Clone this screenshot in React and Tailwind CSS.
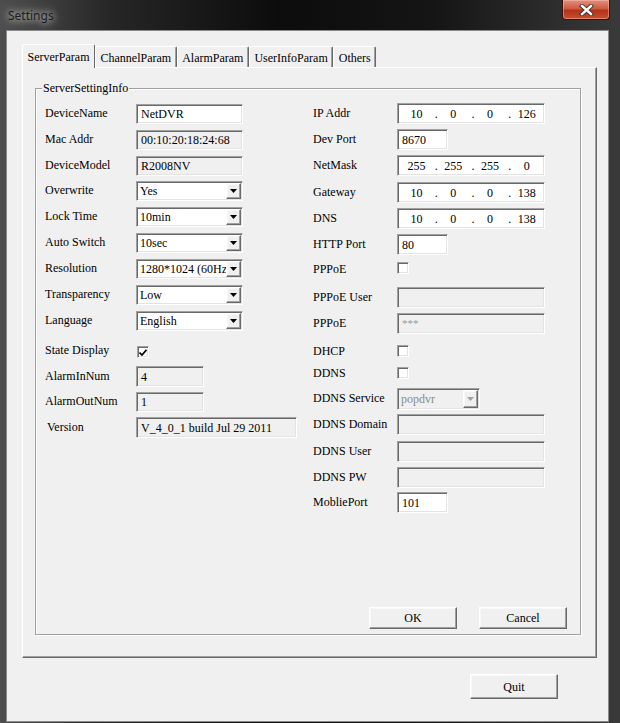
import React from 'react';

const serif = { fontFamily: '"Liberation Serif", "Times New Roman", serif' };

const sunken =
  'border border-[#a0a0a0] border-b-white border-r-white shadow-[inset_1px_1px_0_#696969,inset_-1px_-1px_0_#e3e3e3]';
const raised =
  'border border-white border-b-[#696969] border-r-[#696969] shadow-[inset_-1px_-1px_0_#a0a0a0,inset_1px_1px_0_#f8f8f8]';

const Field = ({ w, h = 'h-[20px]', value, ro, muted }) => (
  <div
    className={`${w} ${h} ${sunken} ${ro ? 'bg-[#f0f0f0]' : 'bg-white'} flex items-center pl-[4px] overflow-hidden whitespace-nowrap ${
      muted ? 'text-[#9a9a9a] text-[11px]' : 'text-black'
    }`}
  >
    {value}
  </div>
);

const Arrow = ({ disabled }) => (
  <svg width="7" height="4" viewBox="0 0 7 4">
    <path d="M0 0h7L3.5 4z" fill={disabled ? '#a0a0a0' : '#000'} />
  </svg>
);

const Select = ({ w, h = 'h-[20px]', value, disabled }) => (
  <div
    className={`${w} ${h} ${sunken} ${disabled ? 'bg-[#f0f0f0] text-[#8a8a8a]' : 'bg-white text-black'} flex items-stretch p-[1px]`}
  >
    <span className="flex-1 flex items-center pl-[2px] overflow-hidden whitespace-nowrap">{value}</span>
    <span className={`w-[15px] bg-[#f0f0f0] ${raised} flex items-center justify-center`}>
      <Arrow disabled={disabled} />
    </span>
  </div>
);

const Check = ({ checked, className = '' }) => (
  <div className={`w-[12px] h-[12px] bg-white ${sunken} flex items-center justify-center ${className}`}>
    {checked && (
      <svg width="8" height="7" viewBox="0 0 8 7">
        <path d="M0.5 3.5 L3 6 L7.5 0.8" stroke="#000" strokeWidth="1.7" fill="none" />
      </svg>
    )}
  </div>
);

const IpField = ({ parts }) => (
  <div className={`w-[148px] h-[21px] bg-white ${sunken} flex items-center pl-[2px] pr-[1px]`}>
    {parts.map((p, i) => (
      <React.Fragment key={i}>
        <span className="flex-1 text-center">{p}</span>
        {i < 3 && <span className="w-[4px] text-center translate-x-[1.5px]">.</span>}
      </React.Fragment>
    ))}
  </div>
);

const Btn = ({ label, h = 'h-[22px]' }) => (
  <button className={`w-[88px] ${h} bg-[#f0f0f0] ${raised} text-[12px] text-black flex items-center justify-center`} style={serif}>
    {label}
  </button>
);

const Row = ({ label, lw, mt = '', h = 'h-[20px]', lpad = '', children }) => (
  <div className={`flex items-center ${h} ${mt}`}>
    <span className={`${lw} ${lpad} pb-[2px] whitespace-nowrap`}>{label}</span>
    {children}
  </div>
);

const tabs = ['ServerParam', 'ChannelParam', 'AlarmParam', 'UserInfoParam', 'Others'];

export default function App() {
  const L = 'w-[91px]';
  const R = 'w-[84px]';
  return (
    <div className="w-[620px] h-[723px] flex flex-col bg-[linear-gradient(90deg,#4e4e4e_0%,#262626_18%,#0c0c0c_45%,#151515_70%,#3a3a3a_100%)] overflow-hidden">
      {/* Title bar */}
      <div className="h-[30px] flex items-start justify-between">
        <span
          className="pl-[8px] pt-[7px] text-[12px] leading-[18px] text-[#1b1b1b] [text-shadow:0_0_6px_#d8d8d8,0_0_12px_#bdbdbd]"
          style={{ fontFamily: '"Noto Sans", "Open Sans", sans-serif' }}
        >
          Settings
        </span>
        <div className="mr-[10px] w-[48px] h-[20px] rounded-b-[4px] border border-t-0 border-[#3b1208] bg-[linear-gradient(180deg,#e0917f_0%,#cf5a3f_45%,#b3321a_55%,#c8502f_100%)] shadow-[inset_0_0_0_1px_rgba(255,200,190,0.45)] flex items-center justify-center">
          <svg width="15" height="12" viewBox="0 0 15 12">
            <path d="M3 2 L12 10 M12 2 L3 10" stroke="#3a2a28" strokeWidth="4.2" strokeLinecap="square" />
            <path d="M3 2 L12 10 M12 2 L3 10" stroke="#fff" strokeWidth="2.4" strokeLinecap="square" />
          </svg>
        </div>
      </div>

      {/* Client area */}
      <div className="ml-[6px] w-[603px] h-[692px] border border-[#8a8a8a] bg-[#f0f0f0] flex flex-col text-[12px] text-black" style={serif}>
        {/* Tabs */}
        <div className="ml-[15px] mt-[13px] h-[23px] flex items-end">
          {tabs.map((t, i) =>
            i === 0 ? (
              <div
                key={t}
                className="h-[24px] -mb-px relative z-10 bg-[#f0f0f0] px-[4.5px] border-t border-l border-white border-r border-r-[#696969] rounded-t-[2px] flex items-start pt-[3px]"
              >
                {t}
              </div>
            ) : (
              <div
                key={t}
                className="h-[21px] px-[4.5px] border-t border-l border-white border-r border-r-[#696969] shadow-[inset_-1px_0_0_#a0a0a0] rounded-t-[2px] flex items-start pt-[2px]"
              >
                {t}
              </div>
            )
          )}
        </div>

        {/* Tab pane */}
        <div className="ml-[15px] w-[575px] h-[591px] border border-white border-b-[#696969] border-r-[#696969] shadow-[inset_-1px_-1px_0_#a0a0a0] flex flex-col">
          {/* Group box */}
          <div className="relative ml-[12px] mt-[20px] w-[546px] h-[547px] border border-[#a0a0a0] shadow-[inset_1px_1px_0_#fff,1px_1px_0_#fff] flex flex-col">
            <span className="absolute -top-[8px] left-[6px] px-[1px] bg-[#f0f0f0] leading-[14px]">ServerSettingInfo</span>

            <div className="flex">
              {/* Left column */}
              <div className="w-[277px] pl-[9px] pt-[15px] flex flex-col">
                <Row label="DeviceName" lw={L}>
                  <Field w="w-[107px]" value="NetDVR" />
                </Row>
                <Row label="Mac Addr" lw={L} mt="mt-[6px]">
                  <Field w="w-[107px]" value="00:10:20:18:24:68" ro />
                </Row>
                <Row label="DeviceModel" lw={L} mt="mt-[6px]">
                  <Field w="w-[107px]" value="R2008NV" ro />
                </Row>
                <Row label="Overwrite" lw={L} mt="mt-[5px]">
                  <Select w="w-[107px]" value="Yes" />
                </Row>
                <Row label="Lock Time" lw={L} mt="mt-[6px]">
                  <Select w="w-[107px]" value="10min" />
                </Row>
                <Row label="Auto Switch" lw={L} mt="mt-[6px]">
                  <Select w="w-[107px]" value="10sec" />
                </Row>
                <Row label="Resolution" lw={L} mt="mt-[6px]">
                  <Select w="w-[107px]" value="1280*1024 (60Hz)" />
                </Row>
                <Row label="Transparency" lw={L} mt="mt-[6px]">
                  <Select w="w-[107px]" value="Low" />
                </Row>
                <Row label="Language" lw={L} mt="mt-[6px]">
                  <Select w="w-[107px]" value="English" />
                </Row>
                <Row label="State Display" lw={L} mt="mt-[10px]">
                  <Check checked className="ml-[1px] mt-[2px]" />
                </Row>
                <Row label="AlarmInNum" lw={L} mt="mt-[5px]" h="h-[21px]">
                  <Field w="w-[68px]" h="h-[21px]" value="4" ro />
                </Row>
                <Row label="AlarmOutNum" lw={L} mt="mt-[5px]">
                  <Field w="w-[68px]" value="1" ro />
                </Row>
                <Row label="Version" lw={L} lpad="pl-[2px]" mt="mt-[5px]" h="h-[21px]">
                  <Field w="w-[161px]" h="h-[21px]" value="V_4_0_1 build Jul 29 2011" ro />
                </Row>
              </div>

              {/* Right column */}
              <div className="pt-[14px] flex flex-col">
                <Row label="IP Addr" lw={R} h="h-[21px]">
                  <IpField parts={['10', '0', '0', '126']} />
                </Row>
                <Row label="Dev Port" lw={R} h="h-[21px]" mt="mt-[5px]">
                  <Field w="w-[51px]" h="h-[21px]" value="8670" />
                </Row>
                <Row label="NetMask" lw={R} h="h-[21px]" mt="mt-[5px]">
                  <IpField parts={['255', '255', '255', '0']} />
                </Row>
                <Row label="Gateway" lw={R} h="h-[21px]" mt="mt-[6px]">
                  <IpField parts={['10', '0', '0', '138']} />
                </Row>
                <Row label="DNS" lw={R} h="h-[21px]" mt="mt-[5px]">
                  <IpField parts={['10', '0', '0', '138']} />
                </Row>
                <Row label="HTTP Port" lw={R} h="h-[21px]" mt="mt-[5px]">
                  <Field w="w-[51px]" h="h-[21px]" value="80" />
                </Row>
                <Row label="PPPoE" lw={R} h="h-[21px]" mt="mt-[4px]">
                  <Check className="mb-[4px]" />
                </Row>
                <Row label="PPPoE User" lw={R} h="h-[21px]" mt="mt-[7px]">
                  <Field w="w-[148px]" h="h-[21px]" value="" ro />
                </Row>
                <Row label="PPPoE" lw={R} h="h-[21px]" mt="mt-[5px]">
                  <Field w="w-[148px]" h="h-[21px]" value="***" ro muted />
                </Row>
                <Row label="DHCP" lw={R} h="h-[21px]" mt="mt-[7px]">
                  <Check className="mb-[2px]" />
                </Row>
                <Row label="DDNS" lw={R} h="h-[21px]" mt="mt-[1px]">
                  <Check className="mb-[2px]" />
                </Row>
                <Row label="DDNS Service" lw={R} h="h-[22px]" mt="mt-[4px]">
                  <Select w="w-[83px]" h="h-[22px]" value="popdvr" disabled />
                </Row>
                <Row label="DDNS Domain" lw={R} h="h-[21px]" mt="mt-[4px]">
                  <Field w="w-[148px]" h="h-[21px]" value="" ro />
                </Row>
                <Row label="DDNS User" lw={R} h="h-[21px]" mt="mt-[6px]">
                  <Field w="w-[148px]" h="h-[21px]" value="" ro />
                </Row>
                <Row label="DDNS PW" lw={R} h="h-[21px]" mt="mt-[5px]">
                  <Field w="w-[148px]" h="h-[21px]" value="" ro />
                </Row>
                <Row label="MobliePort" lw={R} h="h-[21px]" mt="mt-[4px]">
                  <Field w="w-[51px]" h="h-[21px]" value="101" />
                </Row>
              </div>
            </div>

            <div className="mt-auto mb-[5px] mr-[13px] flex justify-end gap-[22px]">
              <Btn label="OK" />
              <Btn label="Cancel" />
            </div>
          </div>
        </div>

        <div className="mt-[16px] mr-[50px] self-end">
          <Btn label="Quit" h="h-[25px]" />
        </div>
      </div>
    </div>
  );
}
